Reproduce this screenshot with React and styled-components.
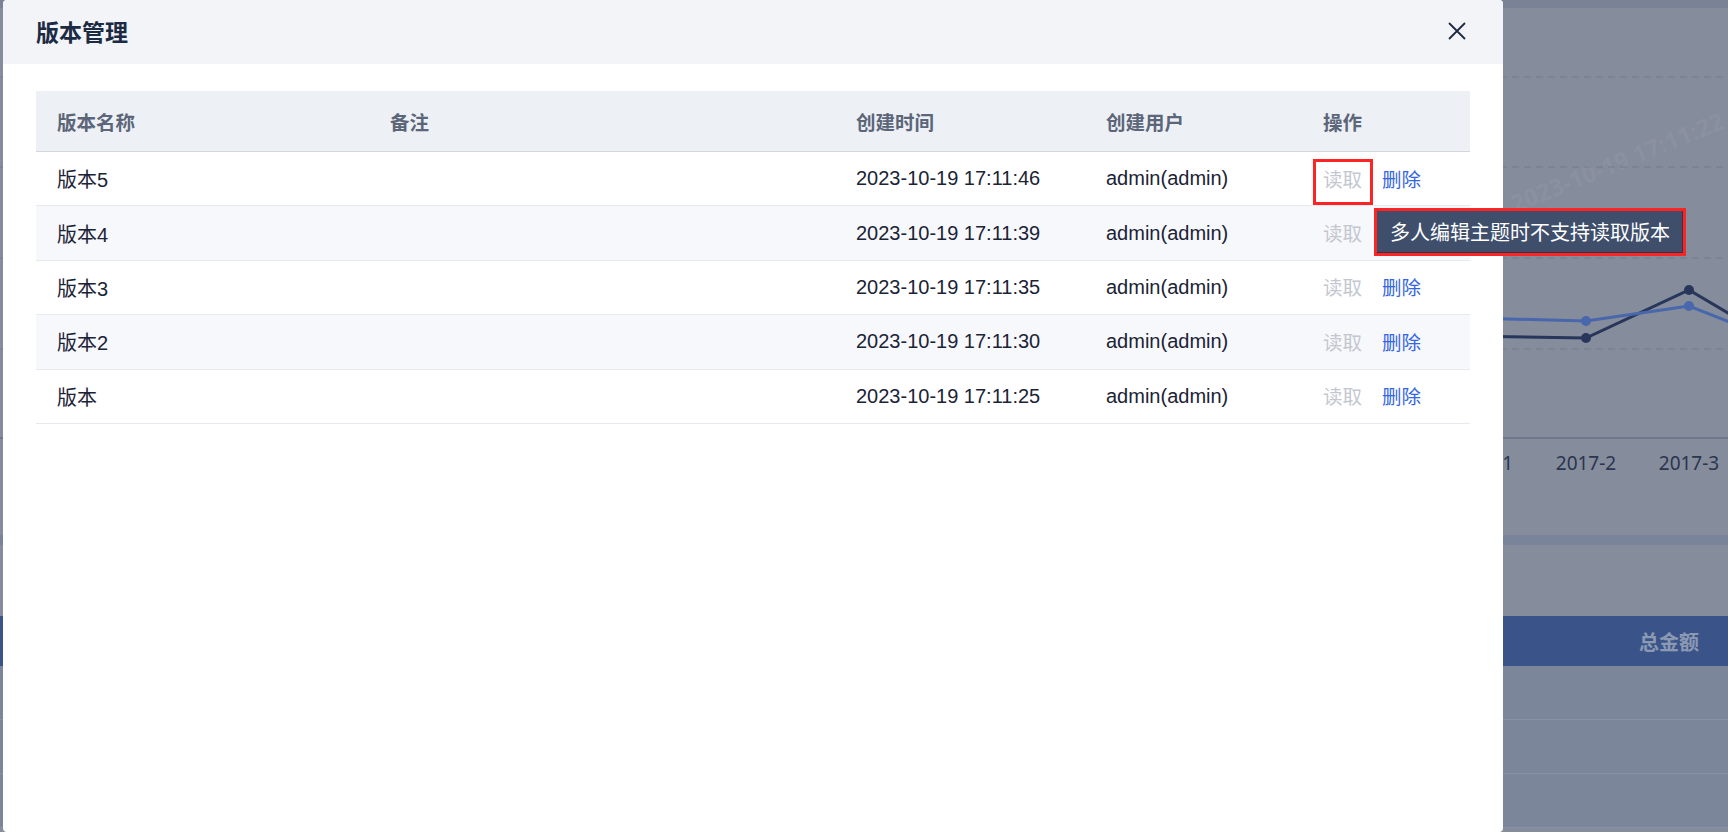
import styled, { createGlobalStyle } from 'styled-components';

const GlobalStyle = createGlobalStyle`
  html, body {
    margin: 0;
    padding: 0;
    overflow: hidden;
  }
  body {
    font-family: "Liberation Sans", "Noto Sans CJK SC", sans-serif;
  }
`;

const Page = styled.div`
  position: relative;
  width: 1728px;
  height: 832px;
  overflow: hidden;
  background: #858c9b;
`;

const TopStrip = styled.div`
  height: 8px;
  background: #7a8396;
`;

const ChartPanel = styled.div`
  height: 527px;
  svg {
    display: block;
  }
`;

const Divider = styled.div`
  height: 10px;
  background: #79839a;
`;

const Spacer = styled.div`
  height: 71px;
`;

const GridHead = styled.div`
  display: flex;
  justify-content: flex-end;
  align-items: center;
  height: 50px;
  padding-right: 29px;
  background: #3a5489;
  color: #8d99b3;
  font-family: "Noto Sans CJK SC", sans-serif;
  font-weight: 700;
  font-size: 20px;
`;

const GridRow = styled.div`
  height: 53px;
  background: #7b869b;
  border-bottom: 1px solid #8791a3;
`;

const Modal = styled.div`
  position: absolute;
  left: 3px;
  top: 0;
  width: 1500px;
  height: 832px;
  background: #fff;
  border-radius: 4px;
  display: flex;
  flex-direction: column;
`;

const ModalHeader = styled.div`
  display: flex;
  align-items: center;
  justify-content: space-between;
  height: 64px;
  padding: 0 37px 0 33px;
  background: #f2f4f7;
  border-radius: 4px 4px 0 0;
  flex-shrink: 0;
`;

const Title = styled.h2`
  margin: 0;
  font-family: "Noto Sans CJK SC", sans-serif;
  font-size: 23px;
  font-weight: 700;
  color: #1d2a44;
  line-height: 1;
  padding-bottom: 2px;
`;

const CloseButton = styled.button`
  display: flex;
  padding: 0;
  border: 0;
  background: none;
  cursor: pointer;
  margin-bottom: 2px;
`;

const ModalBody = styled.div`
  padding: 27px 33px;
`;

const columns = '333px 466px 250px 217px 1fr';

const HeadRow = styled.div`
  display: grid;
  grid-template-columns: ${columns};
  height: 60px;
  background: #edf0f5;
  border-bottom: 1px solid #d2d6de;
`;

const HeadCell = styled.div`
  display: flex;
  align-items: center;
  padding-left: 21px;
  font-family: "Noto Sans CJK SC", sans-serif;
  font-size: 19.5px;
  font-weight: 700;
  color: #5c6679;
`;

const Row = styled.div`
  display: grid;
  grid-template-columns: ${columns};
  box-sizing: border-box;
  height: 54.4px;
  background: ${(p) => (p.$striped ? '#f7f8fc' : '#fff')};
  border-bottom: 1px solid #e7e9ef;
`;

const Cell = styled.div`
  display: flex;
  align-items: center;
  gap: 20px;
  padding-left: 21px;
  font-size: 20px;
  color: #1b2336;
`;

const Action = styled.span`
  position: relative;
  display: inline-block;
  line-height: 24px;
  font-family: "Noto Sans CJK SC", sans-serif;
  font-size: 19.5px;
  cursor: ${(p) => (p.$disabled ? 'not-allowed' : 'pointer')};
  color: ${(p) => (p.$disabled ? '#c3c7cf' : '#3567e3')};

  ${(p) =>
    p.$marked &&
    `
    &::after {
      content: '';
      position: absolute;
      left: -10px;
      right: -11px;
      top: -8px;
      bottom: -14px;
      border: 3px solid #ff2323;
      pointer-events: none;
    }
  `}
`;

const TooltipMark = styled.div`
  position: absolute;
  left: 51px;
  top: 41px;
  z-index: 10;
  border: 3px solid #ff2323;
  white-space: nowrap;
`;

const Tooltip = styled.div`
  display: flex;
  align-items: center;
  height: 42px;
  padding: 0 13px 0 13px;
  background: #3e4e6b;
  box-shadow: inset -1px -1px 0 #2b3750;
  color: #fff;
  font-family: "Noto Sans CJK SC", sans-serif;
  font-size: 20px;
`;

const versions = [
  { name: '版本5', time: '2023-10-19 17:11:46', user: 'admin(admin)' },
  { name: '版本4', time: '2023-10-19 17:11:39', user: 'admin(admin)' },
  { name: '版本3', time: '2023-10-19 17:11:35', user: 'admin(admin)' },
  { name: '版本2', time: '2023-10-19 17:11:30', user: 'admin(admin)' },
  { name: '版本', time: '2023-10-19 17:11:25', user: 'admin(admin)' },
];

const BackgroundChart = () => (
  <svg width="1728" height="527" viewBox="0 0 1728 527">
    <text
      x="1515"
      y="205"
      transform="rotate(-22 1515 205)"
      fill="#8a91a0"
      fontSize="24"
      fontWeight="700"
      fontFamily="Noto Sans, sans-serif"
    >
      2023-10-19 17:11:22
    </text>
    {[69, 159, 250, 341].map((y) => (
      <line key={y} x1="0" x2="1728" y1={y} y2={y} stroke="#737c8d" strokeWidth="1" strokeDasharray="7 5" />
    ))}
    <line x1="0" x2="1728" y1="430" y2="430" stroke="#6f788a" strokeWidth="2" />
    <polyline points="1400,327 1586,330 1689,282 1740,312" fill="none" stroke="#27365a" strokeWidth="3" />
    <polyline points="1400,308 1586,313 1689,298 1740,318" fill="none" stroke="#4867ad" strokeWidth="3" />
    <circle cx="1586" cy="330" r="5" fill="#27365a" />
    <circle cx="1689" cy="282" r="5" fill="#27365a" />
    <circle cx="1586" cy="313" r="5" fill="#4867ad" />
    <circle cx="1689" cy="298" r="5" fill="#4867ad" />
    <g fill="#2a3550" fontSize="19" fontFamily="Noto Sans, sans-serif" textAnchor="middle">
      <text x="1483" y="462">2017-1</text>
      <text x="1586" y="462">2017-2</text>
      <text x="1689" y="462">2017-3</text>
    </g>
  </svg>
);

const App = () => {
  return (
    <>
      <GlobalStyle />
      <Page>
        <TopStrip />
        <ChartPanel>
          <BackgroundChart />
        </ChartPanel>
        <Divider />
        <Spacer />
        <GridHead>总金额</GridHead>
        <GridRow />
        <GridRow />
        <GridRow />

        <Modal>
          <ModalHeader>
            <Title>版本管理</Title>
            <CloseButton aria-label="关闭">
              <svg width="18" height="18" viewBox="0 0 18 18">
                <path d="M1 1L17 17M17 1L1 17" stroke="#1d2a44" strokeWidth="1.8" fill="none" />
              </svg>
            </CloseButton>
          </ModalHeader>
          <ModalBody>
            <HeadRow>
              <HeadCell>版本名称</HeadCell>
              <HeadCell>备注</HeadCell>
              <HeadCell>创建时间</HeadCell>
              <HeadCell>创建用户</HeadCell>
              <HeadCell>操作</HeadCell>
            </HeadRow>
            {versions.map((v, i) => (
              <Row key={v.time} $striped={i % 2 === 1}>
                <Cell>{v.name}</Cell>
                <Cell />
                <Cell>{v.time}</Cell>
                <Cell>{v.user}</Cell>
                <Cell>
                  <Action $disabled $marked={i === 0}>
                    读取
                    {i === 0 && (
                      <TooltipMark>
                        <Tooltip>多人编辑主题时不支持读取版本</Tooltip>
                      </TooltipMark>
                    )}
                  </Action>
                  <Action>删除</Action>
                </Cell>
              </Row>
            ))}
          </ModalBody>
        </Modal>
      </Page>
    </>
  );
};

export default App;
